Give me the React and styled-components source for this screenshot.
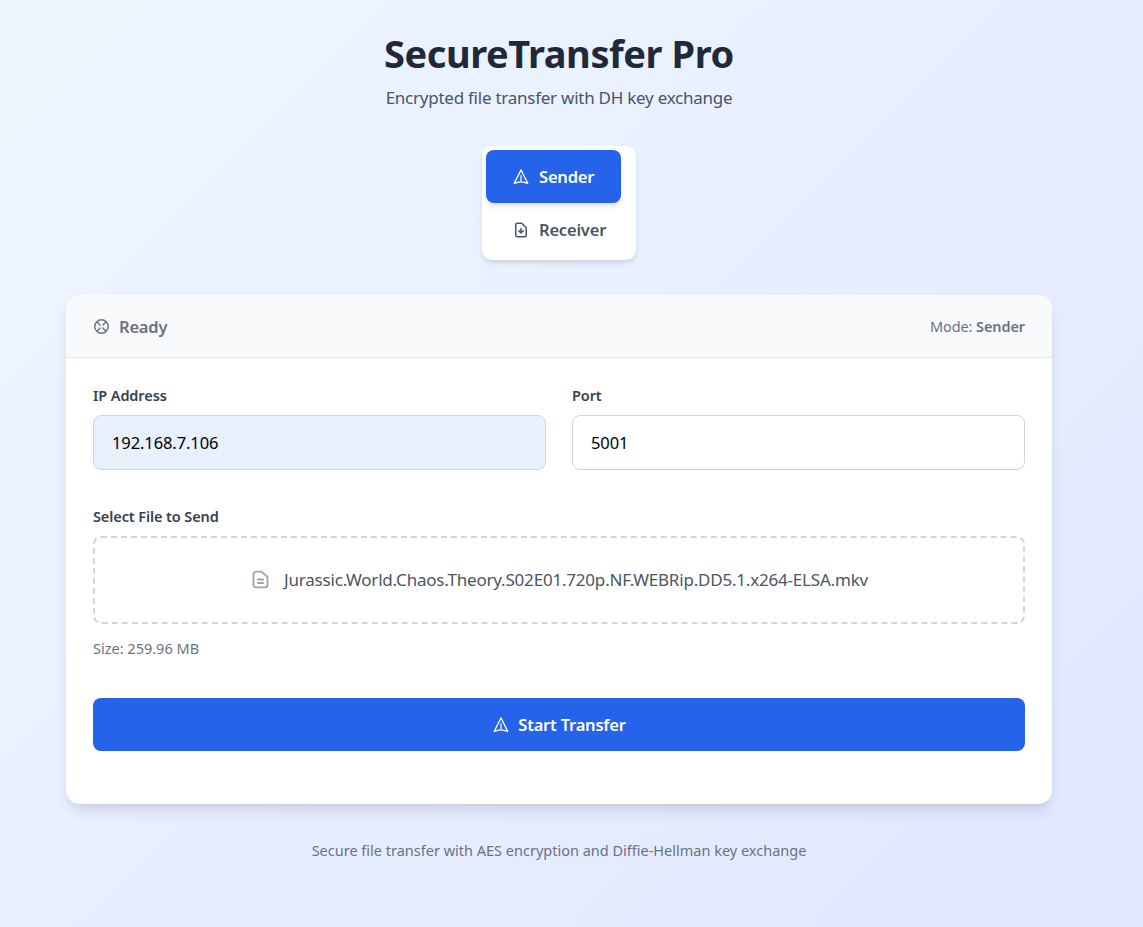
import React from "react";
import styled, { createGlobalStyle } from "styled-components";

const GlobalStyle = createGlobalStyle`
    html, body {
        margin: 0;
        padding: 0;
    }
    body {
        font-family: "Noto Sans", "Open Sans", sans-serif;
        background: linear-gradient(135deg, #eff6ff 0%, #e0e7ff 100%);
        min-height: 927px;
    }
`;

const Page = styled.div`
    width: 1118px;
    min-height: 927px;
    box-sizing: border-box;
    padding: 28px 66px 0;
    display: flex;
    flex-direction: column;
    align-items: center;
`;

const Title = styled.h1`
    margin: 0;
    font-size: 38px;
    line-height: 50px;
    font-weight: 700;
    color: #1f2937;
    letter-spacing: -0.42px;
`;

const Subtitle = styled.p`
    margin: 8px 0 0;
    font-size: 17px;
    line-height: 24px;
    color: #4b5563;
    letter-spacing: -0.25px;
`;

const Tabs = styled.div`
    margin-top: 36px;
    padding: 4px 15px 4px 4px;
    background: #fff;
    border-radius: 10px;
    box-shadow: 0 4px 6px -1px rgba(0, 0, 0, 0.1), 0 2px 4px -1px rgba(0, 0, 0, 0.06);
    display: flex;
    flex-direction: column;
    width: 154px;
    box-sizing: border-box;
`;

const Tab = styled.button`
    height: 53px;
    border: 0;
    border-radius: 8px;
    background: ${({ $active }) => ($active ? "#2563eb" : "transparent")};
    color: ${({ $active }) => ($active ? "#fff" : "#4b5563")};
    box-shadow: ${({ $active }) =>
        $active ? "0 4px 6px -1px rgba(0,0,0,0.1), 0 2px 4px -1px rgba(0,0,0,0.06)" : "none"};
    font: 600 16.5px "Noto Sans", sans-serif;
    letter-spacing: -0.2px;
    display: flex;
    align-items: center;
    gap: 9px;
    padding: 0 0 0 26px;
    white-space: nowrap;
`;

const Card = styled.div`
    margin-top: 35px;
    width: 986px;
    height: 509px;
    background: #fff;
    border-radius: 14px;
    box-shadow: 0 10px 15px -3px rgba(0, 0, 0, 0.1), 0 4px 6px -2px rgba(0, 0, 0, 0.05);
    overflow: hidden;
`;

const StatusBar = styled.div`
    height: 63px;
    box-sizing: border-box;
    background: #f9fafb;
    border-bottom: 1px solid #e5e7eb;
    padding: 0 27px;
    display: flex;
    align-items: center;
    justify-content: space-between;
`;

const Status = styled.div`
    display: flex;
    align-items: center;
    gap: 9px;
    font-size: 16.5px;
    font-weight: 600;
    color: #6b7280;
    letter-spacing: -0.2px;
`;

const Mode = styled.div`
    font-size: 14.5px;
    color: #6b7280;
    letter-spacing: -0.1px;

    b {
        font-weight: 600;
    }
`;

const Body = styled.div`
    padding: 27px 27px 0;
`;

const Row = styled.div`
    display: grid;
    grid-template-columns: 1fr 1fr;
    gap: 26px;
`;

const Label = styled.label`
    display: block;
    font-size: 14.5px;
    line-height: 20px;
    font-weight: 600;
    color: #374151;
    letter-spacing: -0.1px;
    margin-bottom: 10px;
`;

const Input = styled.input`
    display: block;
    width: 100%;
    height: 55px;
    box-sizing: border-box;
    padding: 0 18px;
    border: 1px solid #d1d5db;
    border-radius: 8px;
    font: 16.5px "Noto Sans", sans-serif;
    letter-spacing: -0.1px;
    color: #000;
    background: ${({ $filled }) => ($filled ? "#e8f0fe" : "#fff")};
    outline: none;
`;

const FileGroup = styled.div`
    margin-top: 36px;
`;

const FileBox = styled.div`
    height: 88px;
    box-sizing: border-box;
    border: 2px dashed #d1d5db;
    border-radius: 8px;
    padding-bottom: 2px;
    display: flex;
    align-items: center;
    justify-content: center;
    gap: 13px;
    font-size: 17px;
    color: #4b5563;
    letter-spacing: -0.2px;
`;

const FileSize = styled.p`
    margin: 14px 0 0;
    font-size: 14.5px;
    line-height: 20px;
    color: #6b7280;
`;

const StartButton = styled.button`
    margin-top: 40px;
    width: 100%;
    height: 53px;
    border: 0;
    border-radius: 8px;
    background: #2563eb;
    color: #fff;
    font: 600 16.5px "Noto Sans", sans-serif;
    letter-spacing: -0.2px;
    display: flex;
    align-items: center;
    justify-content: center;
    gap: 8px;
`;

const Footer = styled.p`
    margin: 36px 0 0;
    font-size: 14.5px;
    line-height: 20px;
    color: #6b7280;
`;

const Icon = ({ size = 16, color = "currentColor", weight = 2, children }) => (
    <svg
        width={size}
        height={size}
        viewBox="0 0 24 24"
        fill="none"
        stroke={color}
        strokeWidth={weight}
        strokeLinecap="round"
        strokeLinejoin="round"
    >
        {children}
    </svg>
);

const SendIcon = () => (
    <Icon size={18} weight={1.6}>
        <path d="M12 2.5 21 20.5Q16.5 18.4 12 18.4T3 20.5ZM12 18.4V10" />
    </Icon>
);

const ReceiveIcon = () => (
    <Icon size={18}>
        <path d="M12 10v6m0 0l-3-3m3 3l3-3m2 8H7a2 2 0 01-2-2V5a2 2 0 012-2h5.586a1 1 0 01.707.293l5.414 5.414a1 1 0 01.293.707V19a2 2 0 01-2 2z" />
    </Icon>
);

const FileIcon = () => (
    <Icon size={21} color="#9ca3af" weight={2.1}>
        <path d="M9 12h6m-6 4h6m2 5H7a3 3 0 01-3-3V6a3 3 0 013-3h6l7 6v9a3 3 0 01-3 3z" />
    </Icon>
);

const ReadyIcon = () => (
    <Icon size={17}>
        <circle cx="12" cy="12" r="9.5" />
        <path d="M6.5 6.5l3.5 3.5M17.5 6.5L14 10M6.5 17.5L10 14M17.5 17.5L14 14" />
    </Icon>
);

export default function App() {
    return (
        <>
            <GlobalStyle />
            <Page>
                <Title>SecureTransfer Pro</Title>
                <Subtitle>Encrypted file transfer with DH key exchange</Subtitle>

                <Tabs>
                    <Tab $active>
                        <SendIcon />
                        Sender
                    </Tab>
                    <Tab>
                        <ReceiveIcon />
                        Receiver
                    </Tab>
                </Tabs>

                <Card>
                    <StatusBar>
                        <Status>
                            <ReadyIcon />
                            Ready
                        </Status>
                        <Mode>
                            Mode: <b>Sender</b>
                        </Mode>
                    </StatusBar>
                    <Body>
                        <Row>
                            <div>
                                <Label>IP Address</Label>
                                <Input $filled defaultValue="192.168.7.106" />
                            </div>
                            <div>
                                <Label>Port</Label>
                                <Input defaultValue="5001" />
                            </div>
                        </Row>
                        <FileGroup>
                            <Label>Select File to Send</Label>
                            <FileBox>
                                <FileIcon />
                                Jurassic.World.Chaos.Theory.S02E01.720p.NF.WEBRip.DD5.1.x264-ELSA.mkv
                            </FileBox>
                            <FileSize>Size: 259.96 MB</FileSize>
                        </FileGroup>
                        <StartButton>
                            <SendIcon />
                            Start Transfer
                        </StartButton>
                    </Body>
                </Card>

                <Footer>Secure file transfer with AES encryption and Diffie-Hellman key exchange</Footer>
            </Page>
        </>
    );
}
